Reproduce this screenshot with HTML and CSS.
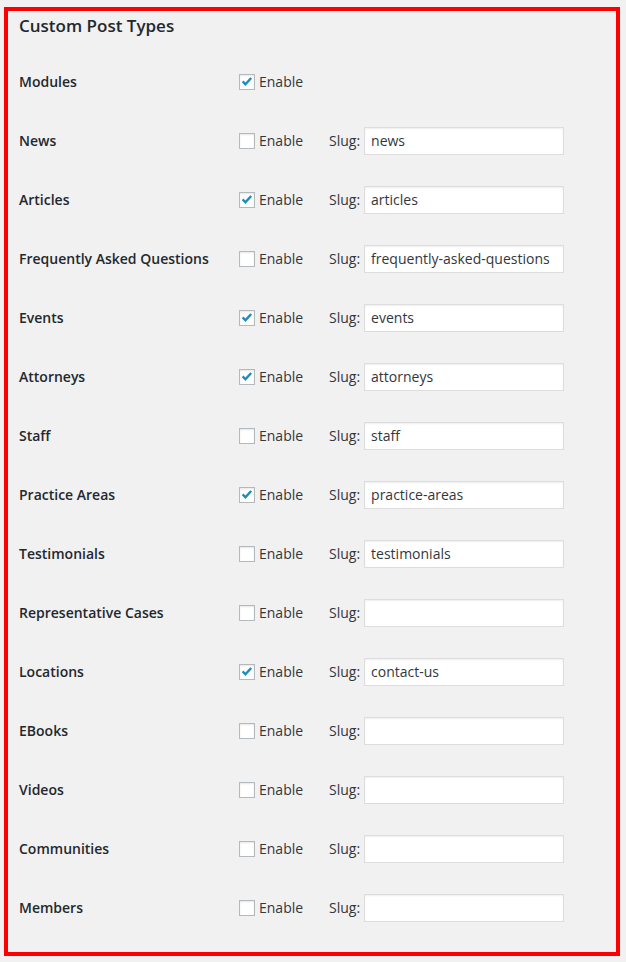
FILE: index.html
```html
<!DOCTYPE html>
<html>
<head>
<meta charset="utf-8">
<link rel="stylesheet" href="styles.css">
</head>
<body>
<div class="panel">
  <h2 class="title">Custom Post Types</h2>
  <div class="rows">
    <div class="row"><div class="name">Modules</div><div class="field"><label class="enable"><span class="cb on"><svg viewBox="0 0 16 16"><path d="M3 7.4 L6.2 10.6 L12.8 3.4" /></svg></span>Enable</label></div></div>
    <div class="row"><div class="name">News</div><div class="field"><label class="enable"><span class="cb"></span>Enable</label><span class="slug">Slug:</span><input class="txt" type="text" value="news"></div></div>
    <div class="row"><div class="name">Articles</div><div class="field"><label class="enable"><span class="cb on"><svg viewBox="0 0 16 16"><path d="M3 7.4 L6.2 10.6 L12.8 3.4" /></svg></span>Enable</label><span class="slug">Slug:</span><input class="txt" type="text" value="articles"></div></div>
    <div class="row"><div class="name">Frequently Asked Questions</div><div class="field"><label class="enable"><span class="cb"></span>Enable</label><span class="slug">Slug:</span><input class="txt" type="text" value="frequently-asked-questions"></div></div>
    <div class="row"><div class="name">Events</div><div class="field"><label class="enable"><span class="cb on"><svg viewBox="0 0 16 16"><path d="M3 7.4 L6.2 10.6 L12.8 3.4" /></svg></span>Enable</label><span class="slug">Slug:</span><input class="txt" type="text" value="events"></div></div>
    <div class="row"><div class="name">Attorneys</div><div class="field"><label class="enable"><span class="cb on"><svg viewBox="0 0 16 16"><path d="M3 7.4 L6.2 10.6 L12.8 3.4" /></svg></span>Enable</label><span class="slug">Slug:</span><input class="txt" type="text" value="attorneys"></div></div>
    <div class="row"><div class="name">Staff</div><div class="field"><label class="enable"><span class="cb"></span>Enable</label><span class="slug">Slug:</span><input class="txt" type="text" value="staff"></div></div>
    <div class="row"><div class="name">Practice Areas</div><div class="field"><label class="enable"><span class="cb on"><svg viewBox="0 0 16 16"><path d="M3 7.4 L6.2 10.6 L12.8 3.4" /></svg></span>Enable</label><span class="slug">Slug:</span><input class="txt" type="text" value="practice-areas"></div></div>
    <div class="row"><div class="name">Testimonials</div><div class="field"><label class="enable"><span class="cb"></span>Enable</label><span class="slug">Slug:</span><input class="txt" type="text" value="testimonials"></div></div>
    <div class="row"><div class="name">Representative Cases</div><div class="field"><label class="enable"><span class="cb"></span>Enable</label><span class="slug">Slug:</span><input class="txt" type="text" value=""></div></div>
    <div class="row"><div class="name">Locations</div><div class="field"><label class="enable"><span class="cb on"><svg viewBox="0 0 16 16"><path d="M3 7.4 L6.2 10.6 L12.8 3.4" /></svg></span>Enable</label><span class="slug">Slug:</span><input class="txt" type="text" value="contact-us"></div></div>
    <div class="row"><div class="name">EBooks</div><div class="field"><label class="enable"><span class="cb"></span>Enable</label><span class="slug">Slug:</span><input class="txt" type="text" value=""></div></div>
    <div class="row"><div class="name">Videos</div><div class="field"><label class="enable"><span class="cb"></span>Enable</label><span class="slug">Slug:</span><input class="txt" type="text" value=""></div></div>
    <div class="row"><div class="name">Communities</div><div class="field"><label class="enable"><span class="cb"></span>Enable</label><span class="slug">Slug:</span><input class="txt" type="text" value=""></div></div>
    <div class="row"><div class="name">Members</div><div class="field"><label class="enable"><span class="cb"></span>Enable</label><span class="slug">Slug:</span><input class="txt" type="text" value=""></div></div>
  </div>
</div>
</body>
</html>
```

FILE: styles.css
```css
html, body {
  margin: 0;
  padding: 0;
  background: #f1f1f1;
}
body {
  font-family: "Open Sans", "Liberation Sans", sans-serif;
  color: #23282d;
  font-size: 14px;
}
.panel {
  box-sizing: border-box;
  width: 616px;
  height: 949px;
  margin: 7px 0 0 4px;
  border: 4px solid #ff0000;
  padding: 0 0 0 11px;
}
.title {
  margin: 0;
  height: 30px;
  line-height: 30px;
  font-size: 17px;
  font-weight: 600;
  color: #23282d;
}
.rows {
  padding-top: 11px;
}
.row {
  display: grid;
  grid-template-columns: 220px auto;
  height: 59px;
  align-items: center;
}
.name {
  font-weight: 600;
  font-size: 14px;
}
.field {
  display: flex;
  align-items: center;
}
.enable {
  display: flex;
  align-items: center;
  width: 90px;
  color: #32373c;
}
.cb {
  box-sizing: border-box;
  width: 16px;
  height: 16px;
  margin-right: 4px;
  border: 1px solid #b4b9be;
  background: #fff;
  box-shadow: inset 0 1px 2px rgba(0,0,0,0.1);
  display: flex;
}
.cb svg {
  width: 14px;
  height: 14px;
}
.cb svg path {
  fill: none;
  stroke: #1e8cbe;
  stroke-width: 2.8;
}
.slug {
  color: #32373c;
  margin-right: 4px;
}
.txt {
  box-sizing: border-box;
  width: 200px;
  height: 28px;
  margin: 0;
  border: 1px solid #ddd;
  box-shadow: inset 0 1px 2px rgba(0,0,0,0.07);
  background: #fff;
  padding: 0 6px;
  font-family: "Open Sans", "Liberation Sans", sans-serif;
  font-size: 14px;
  color: #32373c;
  outline: none;
}
```
